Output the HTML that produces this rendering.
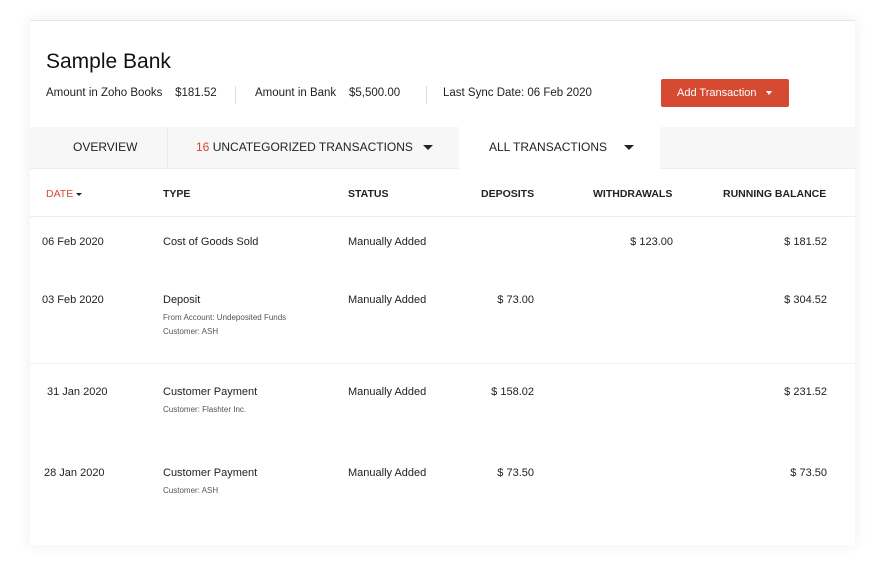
<!DOCTYPE html>
<html><head><style>
*{margin:0;padding:0;box-sizing:border-box}
body{width:885px;height:584px;background:#fff;font-family:"Liberation Sans",sans-serif;color:#222;position:relative;overflow:hidden}
.card{position:absolute;left:30px;top:20px;width:825px;height:525px;background:#fff;border-top:1px solid #e6e6e6;box-shadow:0 0 14px rgba(0,0,0,0.07)}
.a{position:absolute;white-space:nowrap}
.s{font-size:11px}
.xs{font-size:8px;color:#555}
.h{font-size:10.5px;font-weight:bold}
.tri{display:inline-block;width:0;height:0;border-left:5px solid transparent;border-right:5px solid transparent;border-top:5px solid #222;vertical-align:middle}
</style></head><body>
<div class="card">
<div class="a" style="left:16px;top:29px;font-size:21px;color:#111">Sample Bank</div>
<div class="a" style="left:16px;top:66px;font-size:11.5px">Amount in Zoho Books&nbsp;&nbsp;&nbsp; $181.52</div>
<div class="a" style="left:205px;top:65px;width:1px;height:18px;background:#ddd"></div>
<div class="a" style="left:225px;top:66px;font-size:11.5px">Amount in Bank&nbsp;&nbsp;&nbsp; $5,500.00</div>
<div class="a" style="left:396px;top:65px;width:1px;height:18px;background:#ddd"></div>
<div class="a" style="left:413px;top:66px;font-size:11.5px">Last Sync Date: 06 Feb 2020</div>
<div class="a" style="left:631px;top:58px;width:128px;height:28px;background:#d64a31;border-radius:2px;color:#fff;font-size:11px;padding:8px 0 0 16px">Add Transaction&nbsp;&nbsp; <span class="tri" style="border-top-color:#fff;border-width:4px 3.5px 0 3.5px"></span></div>
<div class="a" style="left:0;top:106px;width:825px;height:42px;background:#f7f7f7;border-bottom:1px solid #eee"></div>
<div class="a" style="left:137px;top:106px;width:1px;height:42px;background:#e8e8e8"></div>
<div class="a" style="left:429px;top:106px;width:201px;height:43px;background:#fff"></div>
<div class="a" style="left:43px;top:119px;font-size:12px">OVERVIEW</div>
<div class="a" style="left:166px;top:119px;font-size:12px"><span style="color:#d64a31">16</span> UNCATEGORIZED TRANSACTIONS&nbsp;&nbsp; <span class="tri"></span></div>
<div class="a" style="left:459px;top:119px;font-size:12px">ALL TRANSACTIONS&nbsp;&nbsp;&nbsp;&nbsp; <span class="tri"></span></div>
<div class="a h" style="left:16px;top:167px;color:#d64a31;font-weight:normal">DATE <span class="tri" style="border-width:3px 3px 0 3px"></span></div>
<div class="a h" style="left:133px;top:167px">TYPE</div>
<div class="a h" style="left:318px;top:167px">STATUS</div>
<div class="a h" style="left:451px;top:167px">DEPOSITS</div>
<div class="a h" style="left:563px;top:167px">WITHDRAWALS</div>
<div class="a h" style="left:693px;top:167px">RUNNING BALANCE</div>
<div class="a" style="left:0;top:195px;width:825px;height:1px;background:#eee"></div>
<div class="a" style="left:0;top:342px;width:825px;height:1px;background:#f2f2f2"></div>

<div class="a s" style="left:12px;top:215px">06 Feb 2020</div>
<div class="a s" style="left:133px;top:215px">Cost of Goods Sold</div>
<div class="a s" style="left:318px;top:215px">Manually Added</div>
<div class="a s" style="right:182px;top:215px">$ 123.00</div>
<div class="a s" style="right:28px;top:215px">$ 181.52</div>

<div class="a s" style="left:12px;top:273px">03 Feb 2020</div>
<div class="a s" style="left:133px;top:273px">Deposit</div>
<div class="a xs" style="left:133px;top:292px">From Account: Undeposited Funds</div>
<div class="a xs" style="left:133px;top:306px">Customer: ASH</div>
<div class="a s" style="left:318px;top:273px">Manually Added</div>
<div class="a s" style="right:321px;top:273px">$ 73.00</div>
<div class="a s" style="right:28px;top:273px">$ 304.52</div>

<div class="a s" style="left:17px;top:365px">31 Jan 2020</div>
<div class="a s" style="left:133px;top:365px">Customer Payment</div>
<div class="a xs" style="left:133px;top:384px">Customer: Flashter Inc.</div>
<div class="a s" style="left:318px;top:365px">Manually Added</div>
<div class="a s" style="right:321px;top:365px">$ 158.02</div>
<div class="a s" style="right:28px;top:365px">$ 231.52</div>

<div class="a s" style="left:14px;top:446px">28 Jan 2020</div>
<div class="a s" style="left:133px;top:446px">Customer Payment</div>
<div class="a xs" style="left:133px;top:465px">Customer: ASH</div>
<div class="a s" style="left:318px;top:446px">Manually Added</div>
<div class="a s" style="right:321px;top:446px">$ 73.50</div>
<div class="a s" style="right:28px;top:446px">$ 73.50</div>
</div>
</body></html>
